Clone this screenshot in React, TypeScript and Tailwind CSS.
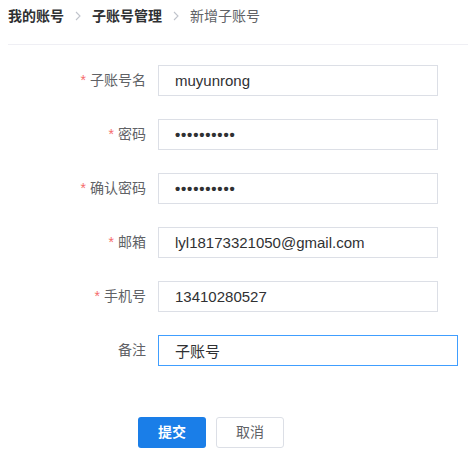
const font = "font-['Liberation_Sans','Noto_Sans_CJK_SC',sans-serif]";

type Field = {
  label: string;
  value: string;
  required?: boolean;
  active?: boolean;
  secret?: boolean;
};

const fields: Field[] = [
  { label: "子账号名", value: "muyunrong", required: true },
  { label: "密码", value: "••••••••••", required: true, secret: true },
  { label: "确认密码", value: "••••••••••", required: true, secret: true },
  { label: "邮箱", value: "lyl18173321050@gmail.com", required: true },
  { label: "手机号", value: "13410280527", required: true },
  { label: "备注", value: "子账号", active: true },
];

const Chevron = () => (
  <svg width="6" height="10" viewBox="0 0 6 10" className="mx-[11px] shrink-0">
    <path d="M1 1l4 4-4 4" fill="none" stroke="#c0c4cc" strokeWidth="1.1" />
  </svg>
);

const FormRow = ({ label, value, required, active, secret }: Field) => (
  <div className="flex items-center h-[31px]">
    <label className="w-[146px] text-right text-[14px] text-[#606266]">
      {required && <span className="text-[#f56c6c] mr-1">*</span>}
      {label}
    </label>
    <input
      readOnly
      value={value}
      className={`ml-3 h-[31px] px-4 text-[15px] text-[#303133] outline-none bg-white ${font} ${
        secret ? "tracking-[0.8px] font-bold" : ""
      } ${active ? "w-[300px] border border-[#409eff]" : "w-[280px] border border-[#dcdfe6]"}`}
    />
  </div>
);

export default function App() {
  return (
    <div className={`w-[468px] h-[456px] bg-white ${font}`}>
      <div className="ml-2 h-[45px] border-b border-[#efeff4] flex items-start">
        <div className="h-[32px] flex items-center text-[14px]">
          <span className="font-bold text-[#303133]">我的账号</span>
          <Chevron />
          <span className="font-bold text-[#303133]">子账号管理</span>
          <Chevron />
          <span className="text-[#606266]">新增子账号</span>
        </div>
      </div>

      <div className="mt-5 flex flex-col gap-[23px]">
        {fields.map((f) => (
          <FormRow key={f.label} {...f} />
        ))}
      </div>

      <div className="mt-[51px] ml-[138px] flex gap-[10px]">
        <button className="w-[68px] h-[31px] rounded-[3px] bg-[#1a7ee8] text-white text-[14px] font-bold">
          提交
        </button>
        <button className="w-[68px] h-[31px] rounded-[3px] border border-[#dcdfe6] bg-white text-[#606266] text-[14px]">
          取消
        </button>
      </div>
    </div>
  );
}
